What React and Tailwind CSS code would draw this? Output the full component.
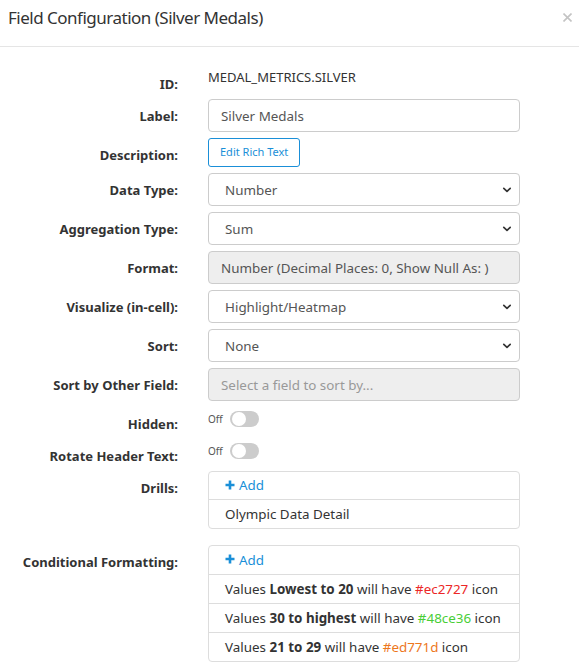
import React from "react";

const Chevron = () => (
  <svg width="10" height="7" viewBox="0 0 10 7" className="absolute right-[7px] top-1/2 -translate-y-1/2">
    <path d="M1.8 1.8 L5 4.8 L8.2 1.8" fill="none" stroke="#333" strokeWidth="1.7" strokeLinecap="round" strokeLinejoin="round" />
  </svg>
);

const Plus = () => (
  <svg width="10" height="10" viewBox="0 0 10 10" className="inline-block mr-[4px] -mt-[2px]">
    <path d="M5 0.5 V9.5 M0.5 5 H9.5" stroke="#1a8fd8" strokeWidth="2.6" />
  </svg>
);

const Row = ({ label, children, className = "" }) => (
  <div className={"flex items-start " + className}>
    <div className="w-[178px] shrink-0 h-[26px] pt-[7px] text-right text-[13px] leading-5 font-bold text-[#333]">
      {label}
    </div>
    <div className="ml-[30px] w-[312px]">{children}</div>
  </div>
);

const Select = ({ value }) => (
  <div className="relative h-[33px] rounded-[4px] border border-[#ccc] bg-white pl-[16px] pt-[2px] flex items-center text-[13.4px] text-[#555]">
    {value}
    <Chevron />
  </div>
);

const Toggle = () => (
  <div className="flex items-start pt-[4px]">
    <span className="text-[10px] leading-[14px] text-[#555] mr-[7px] mt-[1px]">Off</span>
    <div className="w-[29px] h-[16px] rounded-full bg-[#ccc] relative">
      <div className="absolute left-[2px] top-[1px] w-[14px] h-[14px] rounded-full bg-white"></div>
    </div>
  </div>
);

export default function App() {
  return (
    <div className="w-[579px] h-[671px] bg-white overflow-hidden" style={{ fontFamily: '"Noto Sans", "Open Sans", sans-serif' }}>
      <div className="h-[47px] border-b border-[#e5e5e5] flex items-center justify-between pl-[8px] pr-[7px]">
        <div className="text-[17px] tracking-[-0.5px] text-[#333] leading-6 -mt-[10px]">Field Configuration (Silver Medals)</div>
        <svg width="9" height="9" viewBox="0 0 9 9" className="-mt-[12px]">
          <path d="M0.5 0.5 L8.5 8.5 M8.5 0.5 L0.5 8.5" stroke="#c4c4c4" strokeWidth="1.6" />
        </svg>
      </div>
      <div className="pt-[20px] flex flex-col gap-[6px]">
        <Row label="ID:">
          <div className="text-[13px] leading-5 text-[#333]">MEDAL_METRICS.SILVER</div>
        </Row>
        <Row label="Label:">
          <div className="h-[33px] rounded-[4px] border border-[#ccc] bg-white pl-[12px] pt-[2px] flex items-center text-[13.4px] text-[#555]">
            Silver Medals
          </div>
        </Row>
        <Row label="Description:">
          <div className="inline-flex h-[29px] items-center rounded-[3px] border border-[#1a8fd8] px-[11px] text-[11px] text-[#1a8fd8]">
            Edit Rich Text
          </div>
        </Row>
        <Row label="Data Type:">
          <Select value="Number" />
        </Row>
        <Row label="Aggregation Type:">
          <Select value="Sum" />
        </Row>
        <Row label="Format:">
          <div className="h-[33px] rounded-[4px] border border-[#ccc] bg-[#eee] pl-[12px] pt-[2px] flex items-center text-[13.4px] text-[#555]">
            Number (Decimal Places: 0, Show Null As: )
          </div>
        </Row>
        <Row label="Visualize (in-cell):">
          <Select value="Highlight/Heatmap" />
        </Row>
        <Row label="Sort:">
          <Select value="None" />
        </Row>
        <Row label="Sort by Other Field:">
          <div className="h-[33px] rounded-[4px] border border-[#ccc] bg-[#eee] pl-[12px] pt-[2px] flex items-center text-[13.4px] text-[#999]">
            Select a field to sort by...
          </div>
        </Row>
        <Row label="Hidden:">
          <Toggle />
        </Row>
        <Row label="Rotate Header Text:">
          <Toggle />
        </Row>
        <Row label="Drills:">
          <div className="rounded-[4px] border border-[#ddd] text-[13.4px]">
            <div className="h-[28px] pl-[16px] flex items-center text-[#1a8fd8] border-b border-[#ddd]">
              <Plus />Add
            </div>
            <div className="h-[28px] pl-[16px] flex items-center text-[#333]">Olympic Data Detail</div>
          </div>
        </Row>
        <Row label="Conditional Formatting:" className="mt-[10px]">
          <div className="rounded-[4px] border border-[#ddd] text-[13.4px] text-[#333]">
            <div className="h-[29px] pl-[16px] flex items-center text-[#1a8fd8] border-b border-[#ddd]">
              <Plus />Add
            </div>
            <div className="h-[29px] pl-[16px] flex items-center border-b border-[#ddd] whitespace-pre">
              Values <b>Lowest to 20</b> will have <span className="text-[#ec2727]">#ec2727</span> icon
            </div>
            <div className="h-[29px] pl-[16px] flex items-center border-b border-[#ddd] whitespace-pre">
              Values <b>30 to highest</b> will have <span className="text-[#48ce36]">#48ce36</span> icon
            </div>
            <div className="h-[28px] pl-[16px] flex items-center whitespace-pre">
              Values <b>21 to 29</b> will have <span className="text-[#ed771d]">#ed771d</span> icon
            </div>
          </div>
        </Row>
      </div>
    </div>
  );
}
